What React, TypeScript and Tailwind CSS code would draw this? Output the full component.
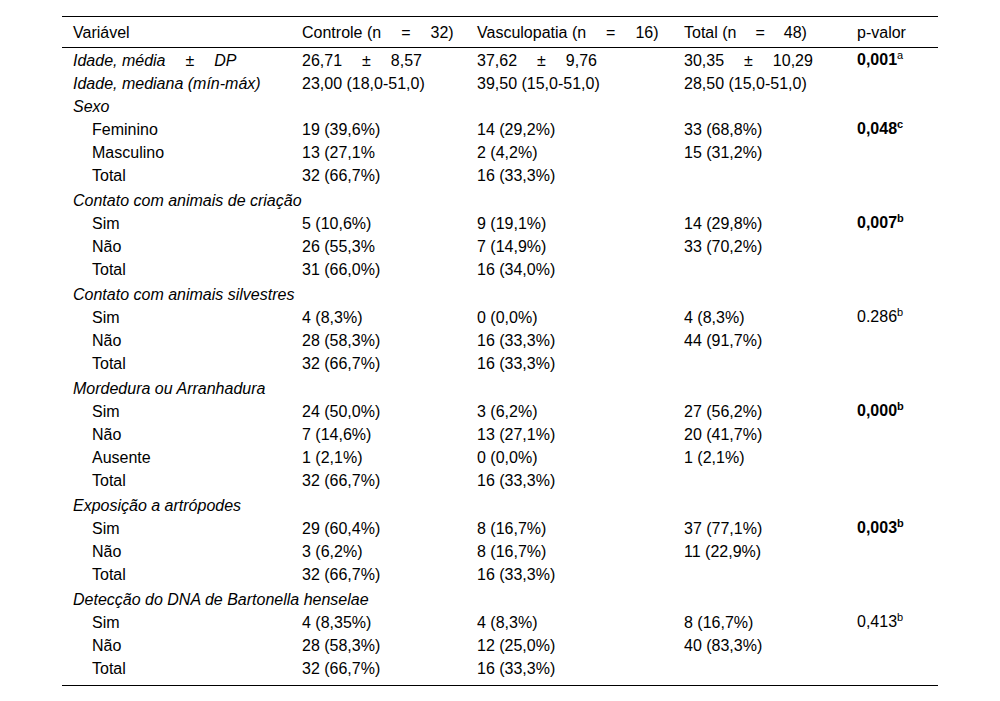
import React from 'react';

type P = { v: string; bold?: boolean; sup: string; supBold?: boolean };
type Row =
  | { kind: 'cat'; label: string; gap?: boolean }
  | { kind: 'item'; label: React.ReactNode; sub?: boolean; c: React.ReactNode; v: React.ReactNode; t: React.ReactNode; p?: P };

// "a ± b" with the wide spacing of the original typesetting
function PM({ a, b, g = 'ml-[20px]' }: { a: string; b: string; g?: string }) {
  return (
    <span>
      {a}
      <span className={g}>±</span>
      <span className={g}>{b}</span>
    </span>
  );
}

const ROWS: Row[] = [
  {
    kind: 'item',
    label: (
      <span className="italic">
        Idade, média<span className="ml-[20px]">±</span>
        <span className="ml-[20px]">DP</span>
      </span>
    ),
    c: <PM a="26,71" b="8,57" />,
    v: <PM a="37,62" b="9,76" g="ml-[20px]" />,
    t: <PM a="30,35" b="10,29" g="ml-[20px]" />,
    p: { v: '0,001', bold: true, sup: 'a' },
  },
  {
    kind: 'item',
    label: <span className="italic">Idade, mediana (mín-máx)</span>,
    c: '23,00 (18,0-51,0)',
    v: '39,50 (15,0-51,0)',
    t: '28,50 (15,0-51,0)',
  },
  { kind: 'cat', label: 'Sexo' },
  { kind: 'item', sub: true, label: 'Feminino', c: '19 (39,6%)', v: '14 (29,2%)', t: '33 (68,8%)', p: { v: '0,048', bold: true, sup: 'c', supBold: true } },
  { kind: 'item', sub: true, label: 'Masculino', c: '13 (27,1%', v: '2 (4,2%)', t: '15 (31,2%)' },
  { kind: 'item', sub: true, label: 'Total', c: '32 (66,7%)', v: '16 (33,3%)', t: '' },
  { kind: 'cat', label: 'Contato com animais de criação', gap: true },
  { kind: 'item', sub: true, label: 'Sim', c: '5 (10,6%)', v: '9 (19,1%)', t: '14 (29,8%)', p: { v: '0,007', bold: true, sup: 'b', supBold: true } },
  { kind: 'item', sub: true, label: 'Não', c: '26 (55,3%', v: '7 (14,9%)', t: '33 (70,2%)' },
  { kind: 'item', sub: true, label: 'Total', c: '31 (66,0%)', v: '16 (34,0%)', t: '' },
  { kind: 'cat', label: 'Contato com animais silvestres', gap: true },
  { kind: 'item', sub: true, label: 'Sim', c: '4 (8,3%)', v: '0 (0,0%)', t: '4 (8,3%)', p: { v: '0.286', sup: 'b' } },
  { kind: 'item', sub: true, label: 'Não', c: '28 (58,3%)', v: '16 (33,3%)', t: '44 (91,7%)' },
  { kind: 'item', sub: true, label: 'Total', c: '32 (66,7%)', v: '16 (33,3%)', t: '' },
  { kind: 'cat', label: 'Mordedura ou Arranhadura', gap: true },
  { kind: 'item', sub: true, label: 'Sim', c: '24 (50,0%)', v: '3 (6,2%)', t: '27 (56,2%)', p: { v: '0,000', bold: true, sup: 'b', supBold: true } },
  { kind: 'item', sub: true, label: 'Não', c: '7 (14,6%)', v: '13 (27,1%)', t: '20 (41,7%)' },
  { kind: 'item', sub: true, label: 'Ausente', c: '1 (2,1%)', v: '0 (0,0%)', t: '1 (2,1%)' },
  { kind: 'item', sub: true, label: 'Total', c: '32 (66,7%)', v: '16 (33,3%)', t: '' },
  { kind: 'cat', label: 'Exposição a artrópodes', gap: true },
  { kind: 'item', sub: true, label: 'Sim', c: '29 (60,4%)', v: '8 (16,7%)', t: '37 (77,1%)', p: { v: '0,003', bold: true, sup: 'b', supBold: true } },
  { kind: 'item', sub: true, label: 'Não', c: '3 (6,2%)', v: '8 (16,7%)', t: '11 (22,9%)' },
  { kind: 'item', sub: true, label: 'Total', c: '32 (66,7%)', v: '16 (33,3%)', t: '' },
  { kind: 'cat', label: 'Detecção do DNA de Bartonella henselae', gap: true },
  { kind: 'item', sub: true, label: 'Sim', c: '4 (8,35%)', v: '4 (8,3%)', t: '8 (16,7%)', p: { v: '0,413', sup: 'b' } },
  { kind: 'item', sub: true, label: 'Não', c: '28 (58,3%)', v: '12 (25,0%)', t: '40 (83,3%)' },
  { kind: 'item', sub: true, label: 'Total', c: '32 (66,7%)', v: '16 (33,3%)', t: '' },
];

const GRID = 'grid grid-cols-[229px_175px_207px_173px_92px]';

function PValue({ p }: { p: P }) {
  return (
    <span className={p.bold ? 'font-bold' : ''}>
      {p.v}
      <span className={`relative -top-[6px] text-[11px] ${p.supBold ? 'font-bold' : 'font-normal'}`}>{p.sup}</span>
    </span>
  );
}

function HeaderN({ label, n, g }: { label: string; n: string; g: string }) {
  return (
    <span className="whitespace-nowrap">
      {label}
      <span className={g}>=</span>
      <span className={g}>{n}</span>
    </span>
  );
}

export default function App() {
  return (
    <div className="min-h-[701px] bg-white text-black pt-[16px] px-[62px] font-['Liberation_Sans',Arial,sans-serif] text-[16px] leading-[18px]">
      <div className="border-t border-black" />
      <div className={`${GRID} h-[31px] items-center pt-[2px] border-b border-black`}>
        <div className="px-[11px]">Variável</div>
        <div className="px-[11px]">
          <HeaderN label="Controle (n" n="32)" g="ml-[20px]" />
        </div>
        <div className="px-[11px]">
          <HeaderN label="Vasculopatia (n" n="16)" g="ml-[20px]" />
        </div>
        <div className="px-[11px]">
          <HeaderN label="Total (n" n="48)" g="ml-[19px]" />
        </div>
        <div className="px-[11px]">p-valor</div>
      </div>
      <div className="pb-[6px] border-b border-black">
        {ROWS.map((r, i) =>
          r.kind === 'cat' ? (
            <div key={i} className={`${GRID} h-[23px] items-center pt-[2px] ${r.gap ? 'mt-[2px]' : ''}`}>
              <div className="col-span-5 px-[11px] italic">{r.label}</div>
            </div>
          ) : (
            <div key={i} className={`${GRID} h-[23px] items-center pt-[2px]`}>
              <div className={`${r.sub ? 'pl-[30px]' : 'pl-[11px]'} pr-[11px] whitespace-nowrap`}>{r.label}</div>
              <div className="px-[11px] whitespace-nowrap">{r.c}</div>
              <div className="px-[11px] whitespace-nowrap">{r.v}</div>
              <div className="px-[11px] whitespace-nowrap">{r.t}</div>
              <div className="px-[11px] whitespace-nowrap">{r.p ? <PValue p={r.p} /> : null}</div>
            </div>
          )
        )}
      </div>
    </div>
  );
}
